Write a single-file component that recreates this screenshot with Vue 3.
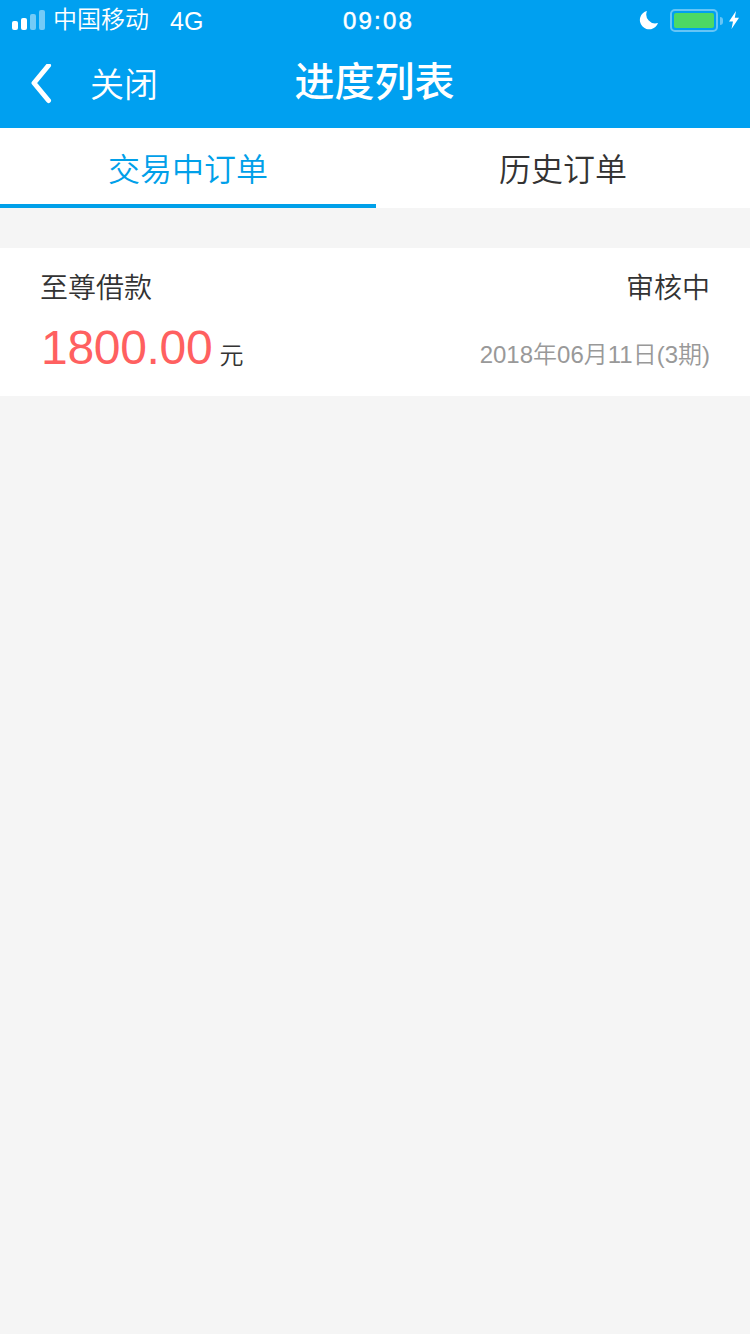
<script setup>
const tabs = [
  { label: '交易中订单', active: true },
  { label: '历史订单', active: false }
]
const signal = [
  { h: 9, o: 1 }, { h: 12, o: 1 }, { h: 16, o: 0.45 }, { h: 20, o: 0.45 }
]
</script>

<template>
  <div class="page">
    <header class="head">
      <div class="status">
        <div class="status-left">
          <div class="signal">
            <i v-for="(b, i) in signal" :key="i" :style="{ height: b.h + 'px', opacity: b.o }"></i>
          </div>
          <span class="carrier">中国移动</span>
          <span class="net">4G</span>
        </div>
        <div class="time">09:08</div>
        <div class="status-right">
          <svg class="moon" width="20" height="20" viewBox="0 0 20 20">
            <path d="M8 1 A9.3 9.3 0 1 0 19 13 A9 9 0 0 1 8 1Z" fill="#fff"/>
          </svg>
          <div class="battery"><div class="level"></div></div>
          <div class="nub"></div>
          <svg class="bolt" width="12" height="20" viewBox="0 0 12 20">
            <path d="M8 1 L1 11.5 H5 L3.5 19 L11 7.8 H6.8 Z" fill="#fff"/>
          </svg>
        </div>
      </div>
      <nav class="nav">
        <div class="nav-left">
          <svg class="back" width="22" height="42" viewBox="0 0 22 42">
            <path d="M18.5 1.5 L4 19 L18.5 36.5" fill="none" stroke="#fff" stroke-width="5" stroke-linecap="round" stroke-linejoin="round"/>
          </svg>
          <span class="close">关闭</span>
        </div>
        <h1 class="title">进度列表</h1>
      </nav>
    </header>

    <div class="tabs">
      <div v-for="t in tabs" :key="t.label" class="tab" :class="{ active: t.active }">{{ t.label }}</div>
    </div>

    <section class="card">
      <div class="row top">
        <span class="name">至尊借款</span>
        <span class="state">审核中</span>
      </div>
      <div class="row bottom">
        <div class="amount"><span class="num">1800.00</span><span class="unit">元</span></div>
        <span class="date">2018年06月11日(3期)</span>
      </div>
    </section>
  </div>
</template>

<style>
html, body { margin: 0; background: #f5f5f5; }
</style>

<style scoped>
.page {
  width: 750px;
  min-height: 1334px;
  background: #f5f5f5;
  font-family: "Liberation Sans", "Noto Sans CJK SC", sans-serif;
}
.head { background: #00a0f0; color: #fff; height: 128px; }
.status {
  height: 40px;
  position: relative;
  display: flex;
  align-items: center;
  justify-content: space-between;
  padding: 0 10px 0 12px;
}
.status-left { display: flex; align-items: center; }
.signal { display: flex; align-items: flex-end; gap: 3px; width: 33px; height: 20px; margin-right: 8px; }
.signal i { width: 6px; background: #fff; border-radius: 2px; display: block; }
.carrier { font-size: 24px; line-height: 30px; font-weight: 350; }
.net { font-size: 25px; line-height: 30px; margin-left: 21px; padding-top: 2px; }
.time {
  position: absolute;
  left: 343px;
  top: 6px;
  font-size: 24px;
  line-height: 30px;
  font-weight: 400;
  letter-spacing: 2.2px;
  -webkit-text-stroke: 0.5px #fff;
}
.status-right { display: flex; align-items: center; }
.moon { margin-right: 11px; }
.battery {
  width: 48px;
  height: 23px;
  margin-top: 1px;
  box-sizing: border-box;
  border: 2px solid #66c5f6;
  border-radius: 5px;
  padding: 2px;
}
.level { width: 100%; height: 100%; background: #4cd964; border-radius: 2px; }
.nub { width: 3px; height: 8px; background: #66c5f6; border-radius: 0 3px 3px 0; margin: 1px 5px 0 2px; }
.nav { height: 88px; position: relative; display: flex; align-items: center; justify-content: center; }
.nav-left { position: absolute; left: 30px; top: 24px; display: flex; align-items: center; }
.close { font-size: 34px; line-height: 42px; margin-left: 38px; font-weight: 350; }
.title { margin: 0 1px 4px 0; font-size: 40px; font-weight: 500; line-height: 44px; }
.tabs { display: grid; grid-template-columns: 376px 374px; height: 80px; background: #fff; }
.tab {
  box-sizing: border-box;
  height: 80px;
  line-height: 84px;
  text-align: center;
  font-size: 32px;
  color: #333;
  font-weight: 350;
}
.tab.active { color: #00a0e9; border-bottom: 4px solid #00a0e9; }
.card {
  margin-top: 40px;
  height: 148px;
  box-sizing: border-box;
  background: #fff;
  padding: 20px 40px 0 40px;
}
.row { display: flex; justify-content: space-between; }
.top { height: 36px; align-items: center; font-size: 28px; color: #333; font-weight: 350; }
.bottom { align-items: flex-end; margin-top: 15px; }
.amount { display: flex; align-items: baseline; }
.num { font-size: 48px; line-height: 58px; letter-spacing: -0.3px; color: #ff6060; margin-left: 1px; }
.unit { font-size: 24px; color: #333; margin-left: 7px; font-weight: 350; }
.date { font-size: 24px; line-height: 34px; padding-bottom: 5px; color: #999; font-weight: 350; }
</style>
